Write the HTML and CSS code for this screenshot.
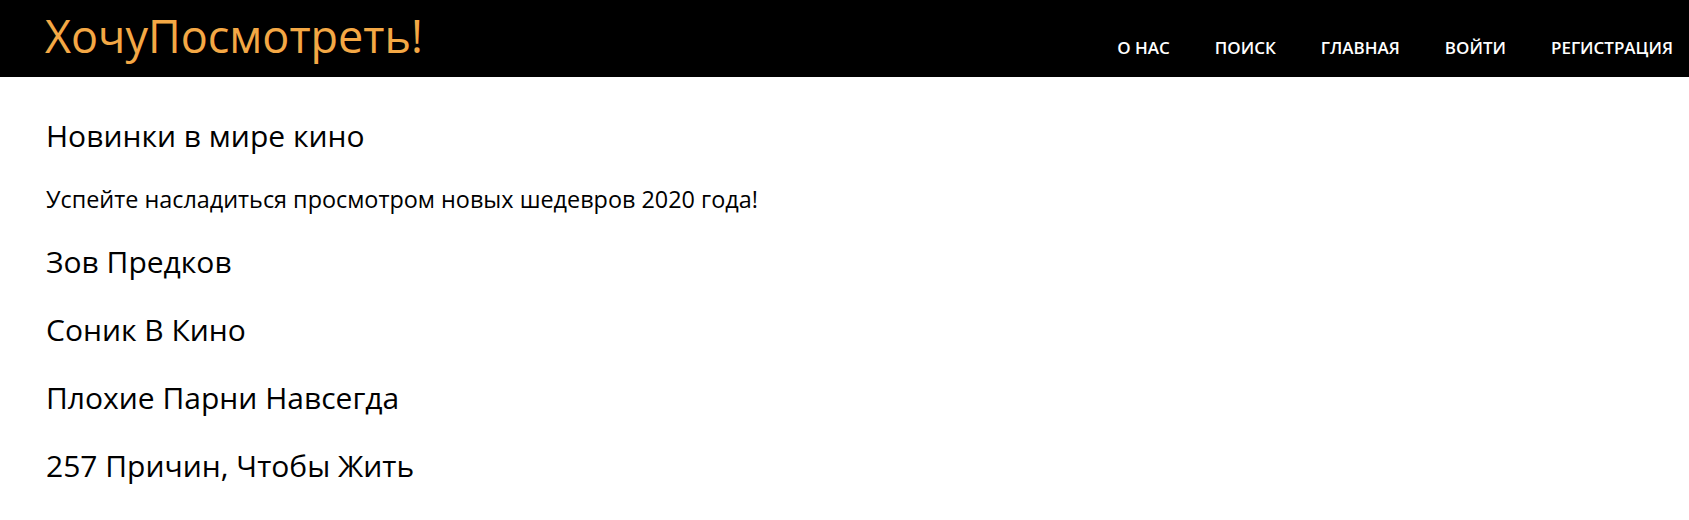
FILE: index.html
```html
<!DOCTYPE html>
<html lang="ru">
<head>
<meta charset="utf-8">
<title>ХочуПосмотреть!</title>
<link rel="stylesheet" href="styles.css">
</head>
<body>
<header class="topbar">
  <div class="logo">ХочуПосмотреть!</div>
  <nav class="nav">
    <a href="#">О нас</a>
    <a href="#">Поиск</a>
    <a href="#">Главная</a>
    <a href="#">Войти</a>
    <a href="#">Регистрация</a>
  </nav>
</header>
<main class="content">
  <h2 class="title">Новинки в мире кино</h2>
  <p class="subtitle">Успейте насладиться просмотром новых шедевров 2020 года!</p>
  <ul class="movies">
    <li>Зов Предков</li>
    <li>Соник В Кино</li>
    <li>Плохие Парни Навсегда</li>
    <li>257 Причин, Чтобы Жить</li>
  </ul>
</main>
</body>
</html>
```
FILE: styles.css
```css
html, body {
  margin: 0;
  padding: 0;
  background: #fff;
  font-family: "Open Sans", "Noto Sans", sans-serif;
  color: #000;
}
.topbar {
  height: 77px;
  background: #000;
  display: flex;
  align-items: center;
  justify-content: space-between;
  padding: 0 16px 0 45px;
}
.logo {
  color: #f4a845;
  font-size: 45px;
  line-height: 1;
  margin-top: -6px;
}
.nav {
  display: flex;
  gap: 45px;
  margin-top: 18px;
}
.nav a {
  color: #fff;
  text-decoration: none;
  text-transform: uppercase;
  font-weight: 600;
  font-size: 17px;
}
.content {
  padding: 0 46px;
}
.title {
  margin: 41px 0 0;
  font-size: 30px;
  line-height: 36px;
  font-weight: 500;
}
.subtitle {
  margin: 30px 0 0;
  font-size: 23.4px;
  line-height: 30px;
  font-weight: 500;
}
.movies {
  list-style: none;
  margin: 14px 0 0;
  padding: 0;
}
.movies li {
  font-size: 30px;
  line-height: 68px;
  font-weight: 400;
}
```
